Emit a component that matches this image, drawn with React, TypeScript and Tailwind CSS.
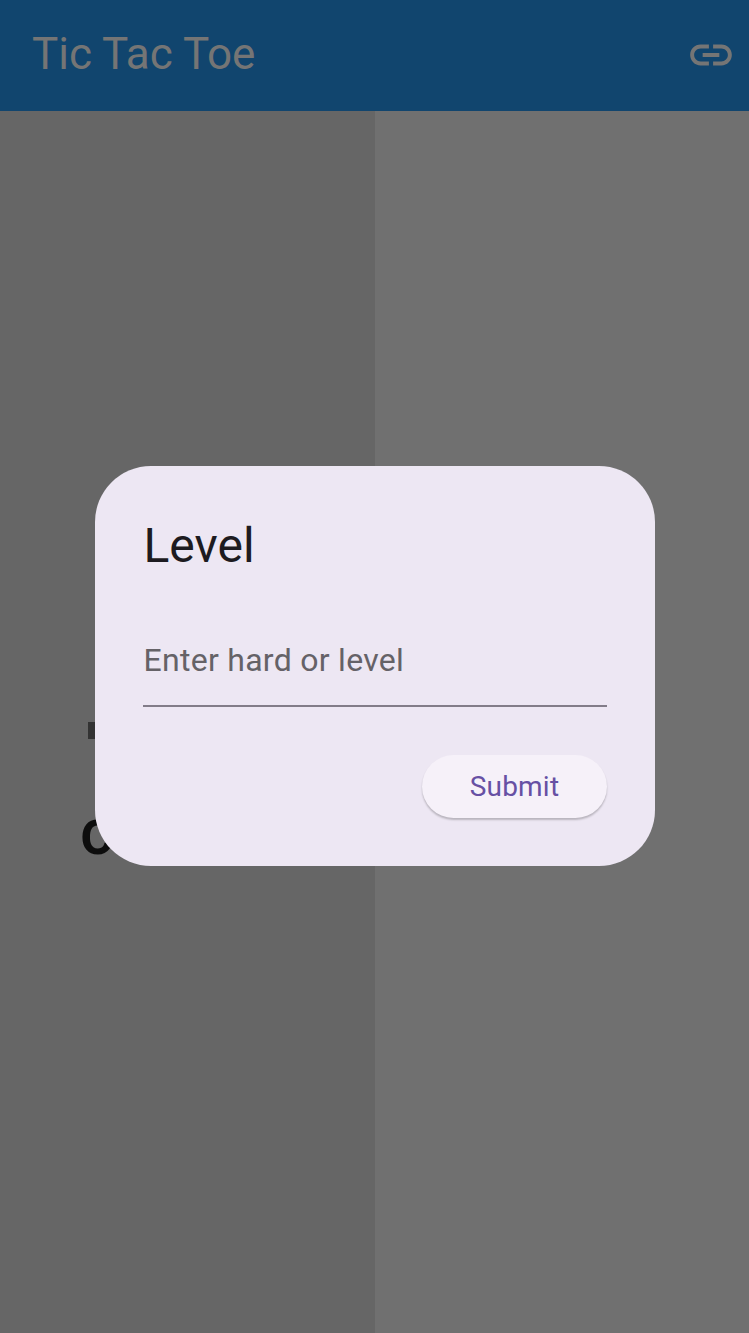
import React from "react";

function LinkIcon() {
  return (
    <svg viewBox="0 0 24 24" className="size-[50px]" fill="#757575" aria-hidden="true">
      <path d="M3.9 12c0-1.71 1.39-3.1 3.1-3.1h4V7H7c-2.76 0-5 2.24-5 5s2.24 5 5 5h4v-1.9H7c-1.71 0-3.1-1.39-3.1-3.1zM8 13h8v-2H8v2zm9-6h-4v1.9h4c1.71 0 3.1 1.39 3.1 3.1s-1.39 3.1-3.1 3.1h-4V17h4c2.76 0 5-2.24 5-5s-2.24-5-5-5z" />
    </svg>
  );
}

function LevelDialog() {
  return (
    <section
      role="dialog"
      className="flex h-[400px] w-[560px] flex-col rounded-[56px] bg-[#ede7f3] px-12 pt-12"
    >
      <h2 className="h-16 pl-[0.5px] text-[48px] leading-[64px] text-[#1d1b20]">Level</h2>
      <div className="mt-8 flex h-[97px] items-center border-b-2 border-[#827c88] pt-1 pl-[0.5px] text-[32px] tracking-[0.28px] text-[#656267]">
        Enter hard or level
      </div>
      <div className="mt-12 flex justify-end">
        <button className="h-[63px] w-[185px] rounded-full bg-[#f6f1f9] pt-px text-[28px] tracking-[0.2px] text-[#6750a4] shadow-[0_2px_2px_rgba(0,0,0,0.22)]">
          Submit
        </button>
      </div>
    </section>
  );
}

export default function App() {
  return (
    <div className="relative flex h-[1333px] w-[749px] flex-col overflow-hidden font-['Roboto',sans-serif]">
      <header className="flex h-[111px] shrink-0 items-center justify-between bg-[#11456e] pr-[13px] pb-px pl-8 text-[44px] text-[#757575]">
        <h1 className="pb-[3px]">Tic Tac Toe</h1>
        <LinkIcon />
      </header>
      <main className="flex grow">
        <div className="relative w-[375px] bg-[#666666]">
          <div className="absolute top-[611px] left-[88px] h-[17px] w-10 bg-[#333333]" />
          <div className="absolute top-[684px] left-[80px] text-[64px] leading-[75px] font-medium text-[#0d0d0d]">c</div>
        </div>
        <div className="grow bg-[#707070]" />
      </main>
      <div className="absolute inset-0 flex items-start justify-center pt-[466px] pl-px">
        <LevelDialog />
      </div>
    </div>
  );
}
